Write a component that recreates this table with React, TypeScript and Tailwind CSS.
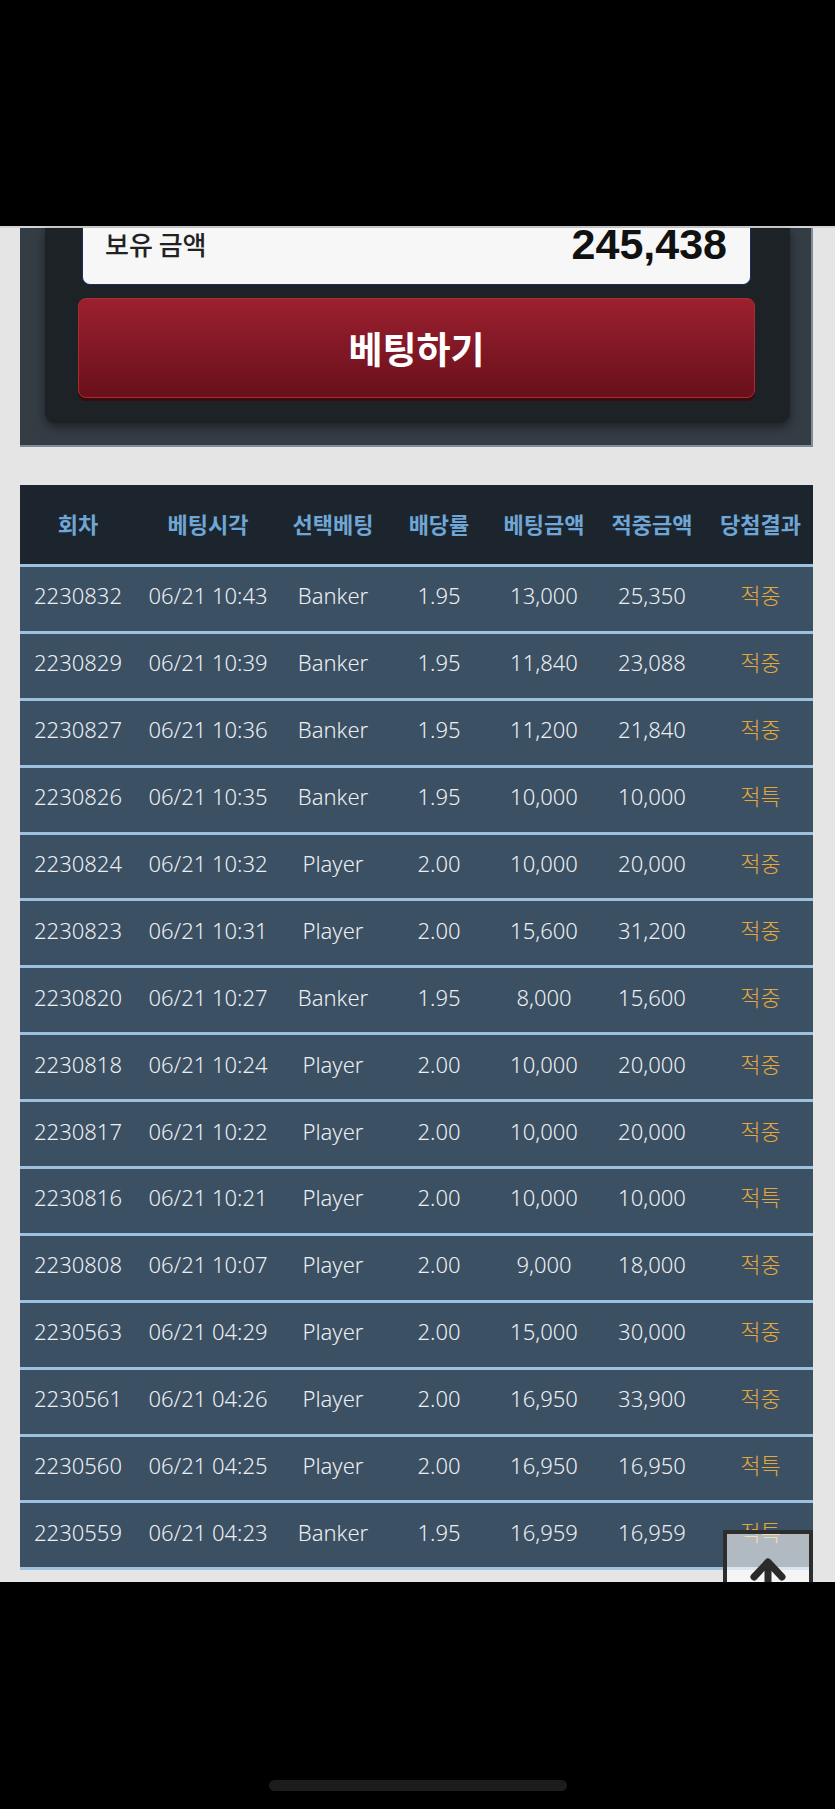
import React from "react";

type Row = [string, string, string, string, string, string, string];

const rows: Row[] = [
  ["2230832", "06/21 10:43", "Banker", "1.95", "13,000", "25,350", "적중"],
  ["2230829", "06/21 10:39", "Banker", "1.95", "11,840", "23,088", "적중"],
  ["2230827", "06/21 10:36", "Banker", "1.95", "11,200", "21,840", "적중"],
  ["2230826", "06/21 10:35", "Banker", "1.95", "10,000", "10,000", "적특"],
  ["2230824", "06/21 10:32", "Player", "2.00", "10,000", "20,000", "적중"],
  ["2230823", "06/21 10:31", "Player", "2.00", "15,600", "31,200", "적중"],
  ["2230820", "06/21 10:27", "Banker", "1.95", "8,000", "15,600", "적중"],
  ["2230818", "06/21 10:24", "Player", "2.00", "10,000", "20,000", "적중"],
  ["2230817", "06/21 10:22", "Player", "2.00", "10,000", "20,000", "적중"],
  ["2230816", "06/21 10:21", "Player", "2.00", "10,000", "10,000", "적특"],
  ["2230808", "06/21 10:07", "Player", "2.00", "9,000", "18,000", "적중"],
  ["2230563", "06/21 04:29", "Player", "2.00", "15,000", "30,000", "적중"],
  ["2230561", "06/21 04:26", "Player", "2.00", "16,950", "33,900", "적중"],
  ["2230560", "06/21 04:25", "Player", "2.00", "16,950", "16,950", "적특"],
  ["2230559", "06/21 04:23", "Banker", "1.95", "16,959", "16,959", "적특"],
];

const headers = ["회차", "베팅시각", "선택베팅", "배당률", "베팅금액", "적중금액", "당첨결과"];

const grid = "grid grid-cols-[116px_144px_106px_106px_104px_112px_1fr]";

export default function App() {
  return (
    <div
      className="relative w-[835px] h-[1809px] overflow-hidden bg-[#e5e5e5] flex flex-col"
      style={{ fontFamily: '"Noto Sans", "Noto Sans CJK KR", sans-serif' }}
    >
      <div className="h-[226px] bg-black shrink-0" />
      <div className="h-[2px] bg-[#d2d2d2] shrink-0" />

      {/* Top panel */}
      <div className="ml-[20px] w-[793px] bg-[#343c44] border-r-2 border-b-2 border-[#7f8b97] pl-[25px] pr-[21px] pb-[22px] shrink-0">
        <div className="bg-[#1d2226] rounded-b-[10px] shadow-[0_4px_10px_rgba(0,0,0,0.45)] pl-[33px] pr-[35px] pb-[25px]">
          <div className="ml-[4px] mr-[4px] h-[57px] bg-[#f7f7f7] rounded-b-[8px] border-x border-b border-[#1f2d5c] flex justify-between items-center pl-[22px] pr-[23px] pb-[24px]">
            <span
              className="text-[26px] font-medium text-[#222] leading-none"
              style={{ fontFamily: '"Noto Sans CJK KR", sans-serif' }}
            >
              보유 금액
            </span>
            <span
              className="text-[43px] font-bold text-[#111] leading-none"
              style={{ fontFamily: '"Liberation Sans", Arial, sans-serif' }}
            >
              245,438
            </span>
          </div>
          <div className="mt-[13px] h-[100px] rounded-[8px] border border-[#ad2a2e] bg-gradient-to-b from-[#9c202f] to-[#68101b] shadow-[0_3px_0_#3a0a10] flex items-center justify-center">
            <span
              className="text-[37px] font-bold text-white leading-none"
              style={{ fontFamily: '"Noto Sans CJK KR", sans-serif' }}
            >
              베팅하기
            </span>
          </div>
        </div>
      </div>

      {/* Table */}
      <div className="mt-[38px] ml-[20px] w-[793px] shrink-0">
        <div className={`${grid} h-[79px] bg-[#1c252d] items-center pb-[3px]`}>
          {headers.map((h) => (
            <div
              key={h}
              className="text-center text-[22px] font-bold text-[#6fa6d6] whitespace-nowrap"
              style={{ fontFamily: '"Noto Sans CJK KR", sans-serif' }}
            >
              {h}
            </div>
          ))}
        </div>
        {rows.map((r, i) => (
          <div
            key={r[0]}
            className={`${grid} h-[66.9px] bg-[#3c5064] border-t-[3px] border-[#9cc2e0] items-center pb-[6px] ${
              i === rows.length - 1 ? "border-b-[3px] h-[69.9px]" : ""
            }`}
          >
            {r.map((c, j) => (
              <div
                key={j}
                className={`text-center text-[22px] font-light whitespace-nowrap ${
                  j === 6 ? "text-[#e4a73c]" : "text-[#eceff2]"
                }`}
              >
                {c}
              </div>
            ))}
          </div>
        ))}
      </div>

      <div className="flex-1" />

      {/* Bottom system bar */}
      <div className="relative z-20 h-[227px] bg-black shrink-0 flex justify-center">
        <div className="mt-[198px] w-[298px] h-[11px] rounded-full bg-[#1c1c1c]" />
      </div>

      {/* Scroll to top button */}
      <div className="absolute z-10 left-[723px] top-[1530px] w-[90px] h-[80px] border-[4px] border-[#2d2d2d] bg-white/60">
        <svg
          className="absolute left-0 top-0"
          width="82"
          height="72"
          viewBox="0 0 82 72"
        >
          <path
            d="M27 43 L41 28 L55 43 M41 29 V72"
            fill="none"
            stroke="#2a2a2a"
            strokeWidth="7"
            strokeLinecap="round"
            strokeLinejoin="round"
          />
        </svg>
      </div>
    </div>
  );
}
